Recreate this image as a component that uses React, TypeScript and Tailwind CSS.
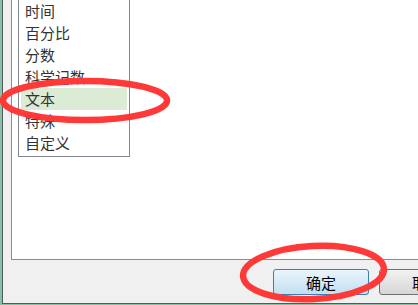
const cjk = "font-['Microsoft_YaHei','Noto_Sans_CJK_SC',sans-serif]";

const items = ['时间', '百分比', '分数', '科学记数', '文本', '特殊', '自定义'];

export default function App() {
  return (
    <div className={`relative w-[418px] h-[305px] overflow-hidden bg-[#88c2a2] ${cjk}`}>
      <div className="ml-[2px] h-[304px] flex flex-col bg-[#f0f0f0] border-l border-b border-[#4f5a60]">
        {/* category panel */}
        <div className="ml-[8px] h-[260px] shrink-0 bg-white border-l border-b border-[#8c8c8c]">
          <div className="ml-[6px] w-[112px] pb-[2px] px-[2px] border-x border-b border-[#828790]">
            {items.map((t) => (
              <div
                key={t}
                className={`h-[22px] pl-[4px] pb-[2px] flex items-center text-[15px] leading-none text-[#333] ${
                  t === '文本' ? 'bg-[#dcebd3]' : ''
                }`}
              >
                {t}
              </div>
            ))}
          </div>
        </div>

        {/* footer buttons */}
        <div className="flex gap-[10px] pl-[270px] pt-[9px]">
          <button className="w-[96px] h-[26px] shrink-0 rounded-[3px] border border-[#3c7fb1] bg-gradient-to-b from-[#eaf5fc] to-[#c2dff1] text-[15px] text-black leading-none">
            确定
          </button>
          <button className="w-[96px] h-[26px] shrink-0 rounded-[3px] border border-[#707070] bg-gradient-to-b from-[#f3f3f3] to-[#d6d6d6] text-[15px] text-black leading-none">
            取消
          </button>
        </div>
      </div>

      {/* red annotation marks */}
      <svg className="absolute inset-0 pointer-events-none" width="418" height="305">
        <ellipse cx="85" cy="100.5" rx="82" ry="19.5" fill="none" stroke="#ff3838" strokeWidth="6.5" />
        <ellipse
          cx="313.5"
          cy="272.5"
          rx="70.5"
          ry="26.5"
          fill="none"
          stroke="#ff3838"
          strokeWidth="6.5"
          transform="rotate(-3 313.5 272.5)"
        />
      </svg>
    </div>
  );
}
